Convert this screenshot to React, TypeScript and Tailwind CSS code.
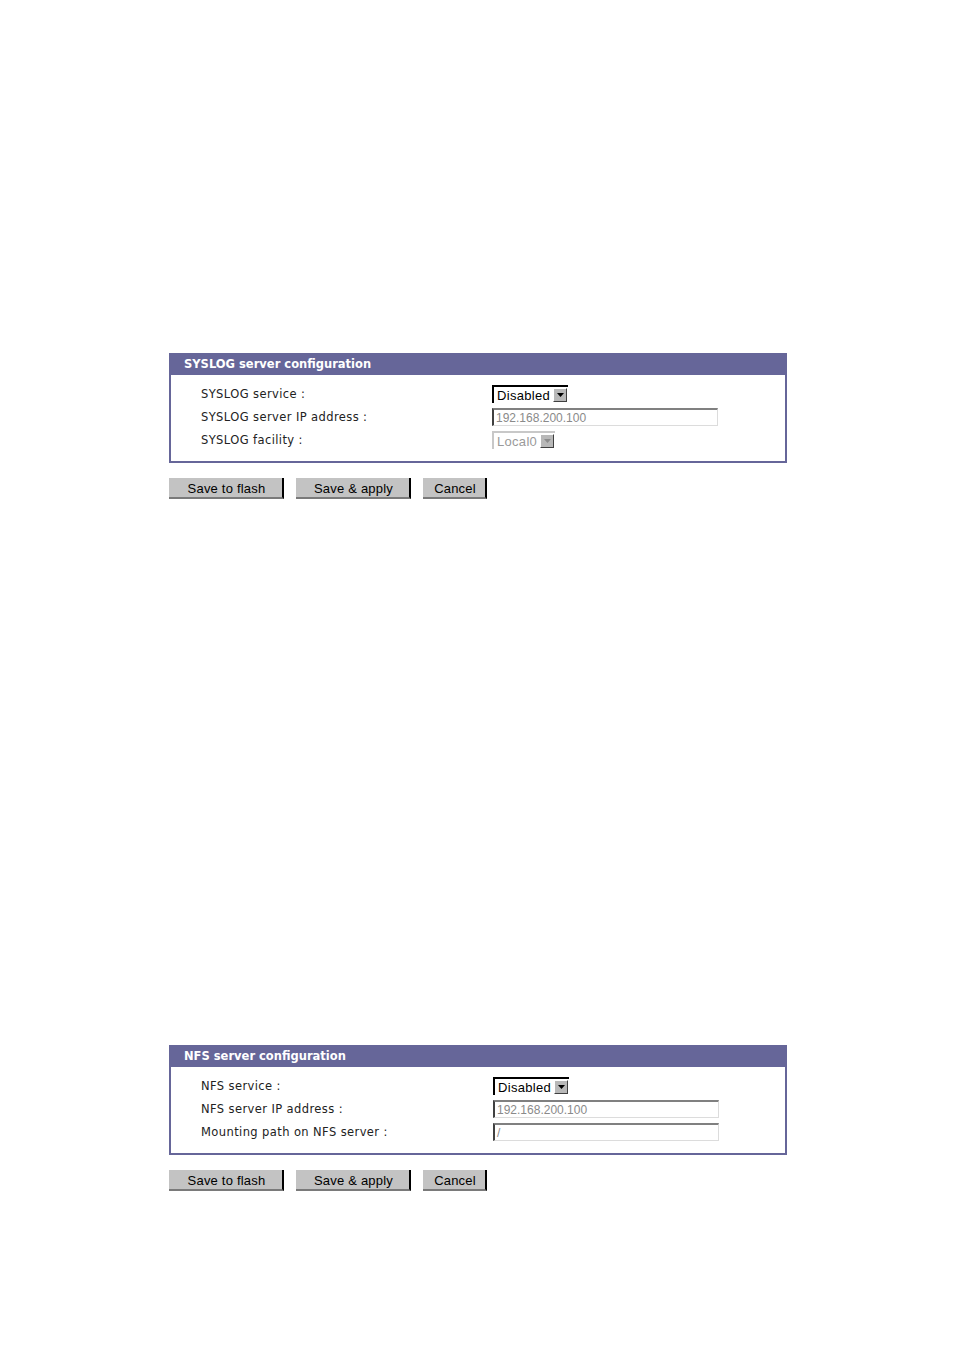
import React from 'react';

const labelFont = { fontFamily: '"DejaVu Sans", Verdana, sans-serif' };
const ctrlFont = { fontFamily: '"Liberation Sans", Arial, sans-serif' };

function Select({ value, width, disabled }: { value: string; width: string; disabled?: boolean }) {
  return (
    <div
      className={`flex h-[18px] items-center justify-between border-t-2 border-l-2 bg-white pr-[1px] ${width} ${
        disabled ? 'border-[#c8c8c8] text-[#9a9a9a]' : 'border-black text-black'
      }`}
      style={ctrlFont}
    >
      <span className="pl-[3px] text-[13px] leading-none tracking-[0.3px]">{value}</span>
      <span className="flex h-[14px] w-[14px] items-center justify-center border-t border-l border-white border-r border-b border-r-[#404040] border-b-[#404040] bg-[#b8b8b8]">
        <svg width="7" height="4" viewBox="0 0 7 4">
          <path d="M0 0h7L3.5 4z" fill={disabled ? '#8c8c8c' : '#000'} />
        </svg>
      </span>
    </div>
  );
}

function TextInput({ value }: { value: string }) {
  return (
    <div
      className="flex h-[18px] w-[226px] items-center border-t-2 border-l-2 border-r border-b border-t-[#808080] border-l-[#404040] border-r-[#dcdcdc] border-b-[#dcdcdc] bg-white pl-[2px] text-[12px] leading-none text-[#8a8a8a]"
      style={ctrlFont}
    >
      {value}
    </div>
  );
}

function Row({ label, children }: { label: string; children: React.ReactNode }) {
  return (
    <div className="flex h-[23px] items-center">
      <div className="w-[321px] pl-[30px] pt-[1px] text-[11.5px] tracking-[0.4px] text-[#222]" style={labelFont}>
        {label}
      </div>
      <div className="-mt-[1px]">{children}</div>
    </div>
  );
}

function Panel({ title, children }: { title: string; children: React.ReactNode }) {
  return (
    <div className="w-[618px]">
      <div
        className="flex h-[22px] items-center bg-[#666699] pl-[15px] pt-[1px] text-[11.5px] font-bold text-white"
        style={labelFont}
      >
        {title}
      </div>
      <div className="border-x-2 border-b-2 border-[#666699] pt-[8px] pb-[9px]">{children}</div>
    </div>
  );
}

function Btn({ label, width }: { label: string; width: string }) {
  return (
    <button
      className={`h-[21px] ${width} border-r-2 border-b-2 border-r-black border-b-[#7a7a7a] bg-[#c3c3c3] pt-[1px] pl-[2px] text-[13px] leading-none tracking-[0.2px] text-black`}
      style={ctrlFont}
    >
      {label}
    </button>
  );
}

function Buttons() {
  return (
    <div className="mt-[15px] flex gap-[12px]">
      <Btn label="Save to flash" width="w-[115px]" />
      <Btn label="Save & apply" width="w-[115px]" />
      <Btn label="Cancel" width="w-[64px]" />
    </div>
  );
}

export default function App() {
  return (
    <div className="min-h-[1351px] w-[954px] bg-white pl-[169px] pt-[353px]">
      <Panel title="SYSLOG server configuration">
        <Row label="SYSLOG service :">
          <Select value="Disabled" width="w-[76px]" />
        </Row>
        <Row label="SYSLOG server IP address :">
          <TextInput value="192.168.200.100" />
        </Row>
        <Row label="SYSLOG facility :">
          <Select value="Local0" width="w-[63px]" disabled />
        </Row>
      </Panel>
      <Buttons />

      <div className="mt-[546px]">
        <Panel title="NFS server configuration">
          <Row label="NFS service :">
            <div className="pl-[1px]">
              <Select value="Disabled" width="w-[76px]" />
            </div>
          </Row>
          <Row label="NFS server IP address :">
            <div className="pl-[1px]">
              <TextInput value="192.168.200.100" />
            </div>
          </Row>
          <Row label="Mounting path on NFS server :">
            <div className="pl-[1px]">
              <TextInput value="/" />
            </div>
          </Row>
        </Panel>
        <Buttons />
      </div>
    </div>
  );
}
